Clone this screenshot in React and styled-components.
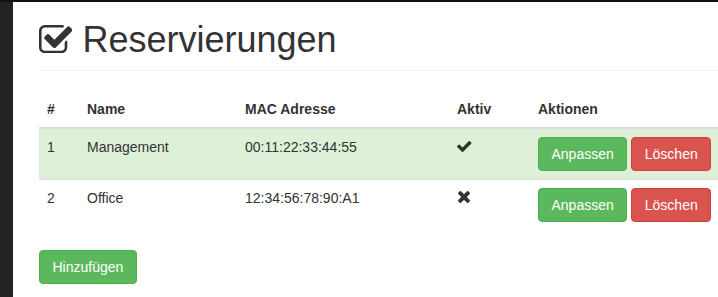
import React from "react";
import styled, { createGlobalStyle } from "styled-components";

const GlobalStyle = createGlobalStyle`
  html, body {
    margin: 0;
    padding: 0;
    background: #ffffff;
    overflow: hidden;
  }
  body {
    font-family: "Liberation Sans", Arial, Helvetica, sans-serif;
    font-size: 14px;
    line-height: 20px;
    color: #333333;
  }
`;

const Shell = styled.div`
  display: flex;
  min-height: 100vh;
  border-top: 2px solid #111111;
  box-sizing: border-box;
`;

const Sidebar = styled.aside`
  flex: 0 0 13px;
  background: #222222;
`;

const Main = styled.main`
  flex: 1 1 auto;
  min-width: 0;
  padding: 0 0 0 26px;
`;

const PageHeader = styled.div`
  margin: 18px 0 20px;
  padding-bottom: 10px;
  border-bottom: 1px solid #eeeeee;
`;

const Title = styled.h1`
  display: flex;
  align-items: flex-start;
  gap: 10px;
  margin: 0;
  font-size: 36px;
  line-height: 40px;
  font-weight: 500;
  color: #333333;
`;

const TitleIcon = styled.svg`
  flex: 0 0 auto;
  width: 33.4px;
  height: 28.3px;
  margin-top: 4.6px;
  fill: #333333;
`;

const Table = styled.table`
  width: 680px;
  table-layout: fixed;
  border-collapse: collapse;
  border-spacing: 0;
  margin-bottom: 20px;
`;

const Th = styled.th`
  box-sizing: border-box;
  width: ${(p) => p.$w}px;
  padding: 8px;
  text-align: left;
  vertical-align: bottom;
  font-weight: bold;
  line-height: 20px;
  border-bottom: 2px solid #dddddd;
  white-space: nowrap;
`;

const Row = styled.tr`
  background: ${(p) => (p.$success ? "#dff0d8" : "transparent")};
`;

const Td = styled.td`
  padding: 8px;
  vertical-align: top;
  line-height: 20px;
  border-top: 1px solid #dddddd;
  white-space: nowrap;
`;

const StatusIcon = styled.svg`
  display: block;
  width: ${(p) => p.$w}px;
  height: ${(p) => p.$h}px;
  margin: ${(p) => p.$mt}px 0 0 ${(p) => p.$ml}px;
  fill: #333333;
`;

const Actions = styled.div`
  display: flex;
  gap: 4px;
`;

const Button = styled.button`
  display: inline-block;
  box-sizing: border-box;
  margin: 0;
  padding: 6px 12.5px;
  font-family: inherit;
  font-size: 14px;
  line-height: 20px;
  color: #ffffff;
  border-radius: 4px;
  border: 1px solid ${(p) => (p.$variant === "danger" ? "#d43f3a" : "#4cae4c")};
  background: ${(p) => (p.$variant === "danger" ? "#d9534f" : "#5cb85c")};
  cursor: pointer;
  white-space: nowrap;
`;

const CHECK_SQUARE =
  "M1472 930v318q0 119-84.5 203.5t-203.5 84.5h-832q-119 0-203.5-84.5t-84.5-203.5v-832q0-119 84.5-203.5t203.5-84.5h832q63 0 117 25 15 7 18 23 3 17-9 29l-49 49q-10 10-23 10-3 0-9-2-23-6-45-6h-832q-66 0-113 47t-47 113v832q0 66 47 113t113 47h832q66 0 113-47t47-113v-254q0-13 9-22l64-64q10-10 23-10 6 0 12 3 20 8 20 29zm231-489l-814 814q-24 24-57 24t-57-24l-430-430q-24-24-24-57t24-57l110-110q24-24 57-24t57 24l263 263 647-647q24-24 57-24t57 24l110 110q24 24 24 57t-24 57z";

const CHECK =
  "M1671 566q0 40-28 68l-724 724-136 136q-28 28-68 28t-68-28l-136-136-362-362q-28-28-28-68t28-68l136-136q28-28 68-28t68 28l294 295 656-657q28-28 68-28t68 28l136 136q28 28 28 68z";

const TIMES =
  "M1490 1322q0 40-28 68l-136 136q-28 28-68 28t-68-28l-294-294-294 294q-28 28-68 28t-68-28l-136-136q-28-28-28-68t28-68l294-294-294-294q-28-28-28-68t28-68l136-136q28-28 68-28t68 28l294 294 294-294q28-28 68-28t68 28l136 136q28 28 28 68t-28 68l-294 294 294 294q28 28 28 68z";

const rows = [
  { id: 1, name: "Management", mac: "00:11:22:33:44:55", active: true },
  { id: 2, name: "Office", mac: "12:34:56:78:90:A1", active: false },
];

function Active({ on }) {
  return on ? (
    <StatusIcon viewBox="121 334 1550 1188" $w={14.5} $h={11.1} $mt={4} $ml={0}>
      <path d={CHECK} />
    </StatusIcon>
  ) : (
    <StatusIcon viewBox="302 366 1188 1188" $w={12} $h={12} $mt={2.5} $ml={1}>
      <path d={TIMES} />
    </StatusIcon>
  );
}

export default function App() {
  return (
    <>
      <GlobalStyle />
      <Shell>
        <Sidebar />
        <Main>
          <PageHeader>
            <Title>
              <TitleIcon viewBox="64 128 1664 1408">
                <path d={CHECK_SQUARE} />
              </TitleIcon>
              <span>Reservierungen</span>
            </Title>
          </PageHeader>
          <Table>
            <thead>
              <tr>
                <Th $w={40}>#</Th>
                <Th $w={158}>Name</Th>
                <Th $w={212}>MAC Adresse</Th>
                <Th $w={81}>Aktiv</Th>
                <Th $w={189}>Aktionen</Th>
              </tr>
            </thead>
            <tbody>
              {rows.map((r) => (
                <Row key={r.id} $success={r.active}>
                  <Td>{r.id}</Td>
                  <Td>{r.name}</Td>
                  <Td>{r.mac}</Td>
                  <Td>
                    <Active on={r.active} />
                  </Td>
                  <Td>
                    <Actions>
                      <Button $variant="success">Anpassen</Button>
                      <Button $variant="danger">Löschen</Button>
                    </Actions>
                  </Td>
                </Row>
              ))}
            </tbody>
          </Table>
          <Button $variant="success">Hinzufügen</Button>
        </Main>
      </Shell>
    </>
  );
}
